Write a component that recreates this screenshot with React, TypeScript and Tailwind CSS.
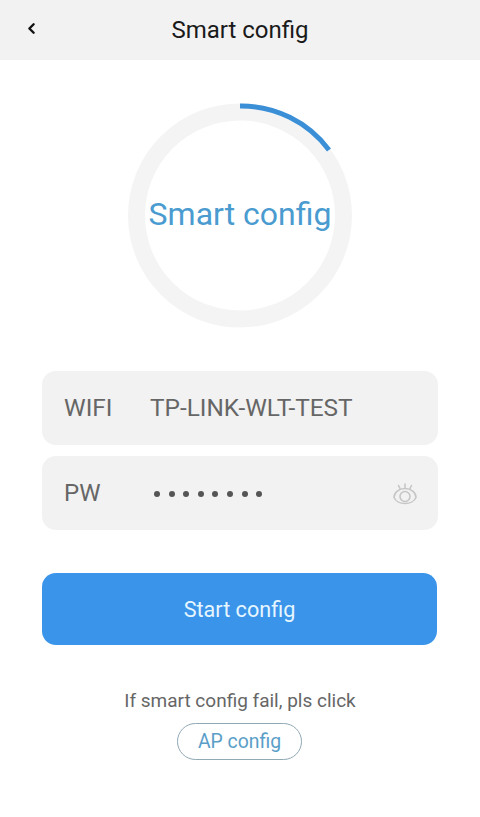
import { ChevronLeft } from 'lucide-react';

function EyeIcon() {
  return (
    <svg width="26" height="24" viewBox="0 0 26 24" fill="none" stroke="#c6c6c6" strokeWidth="1.6" strokeLinecap="round">
      <path d="M2 15.500C2 10.500 7 6.500 13 6.500s11 4 11 9c-1.500 3.500-6 6-11 6s-9.500-2.500-11-6z" />
      <circle cx="13" cy="14.500" r="5" />
      <path d="M8 6.500L6.500 3.500M13 5.500V2M18 6.500L19.500 3.500" />
    </svg>
  );
}

export default function App() {
  return (
    <div className="w-[480px] h-[817px] bg-white flex flex-col font-['Roboto',sans-serif]">
      <header className="h-[60px] bg-[#f2f2f2] flex items-center relative">
        <ChevronLeft className="absolute left-[23px] top-[20px] text-[#111]" size={17} strokeWidth={3.4} />
        <h1 className="w-full text-center text-[24px] leading-[60px] text-[#1a1a1a]">Smart config</h1>
      </header>

      <div className="mt-[43px] mx-auto w-[224px] h-[225px] relative flex items-center justify-center">
        <svg className="absolute inset-0" width="224" height="225" viewBox="0 0 224 225" fill="none">
          <circle cx="112" cy="112.5" r="103.500" stroke="#f4f4f4" strokeWidth="17" />
          <path d="M112 3 A109.5 109.5 0 0 1 201 47" stroke="#3a8fd6" strokeWidth="5" />
        </svg>
        <span className="relative text-[32px] leading-none text-[#4a9bd0] -mt-[4px]">Smart config</span>
      </div>

      <div className="mt-[43px] mx-[42px] flex flex-col gap-[11px]">
        <div className="h-[74px] bg-[#f2f2f2] rounded-[14px] flex items-center px-[22px] text-[24.400px] text-[#666]">
          <span className="w-[86px]">WIFI</span>
          <span>TP-LINK-WLT-TEST</span>
        </div>
        <div className="h-[74px] bg-[#f2f2f2] rounded-[14px] flex items-center px-[22px] text-[24px] text-[#666]">
          <span className="w-[90px]">PW</span>
          <span className="flex gap-[8.600px] mt-[2px]">
            {[0, 1, 2, 3, 4, 5, 6, 7].map((i) => (
              <span key={i} className="w-[6px] h-[6px] rounded-full bg-[#555]" />
            ))}
          </span>
          <span className="ml-auto -mr-[2px] mt-[1px] flex">
            <EyeIcon />
          </span>
        </div>
      </div>

      <button className="mt-[43px] mx-[42px] w-[395px] h-[72px] pt-[2px] bg-[#3a94ea] rounded-[14px] text-[21.600px] text-[#e6f6ff]">
        Start config
      </button>

      <p className="mt-[42px] text-center text-[19px] leading-[28px] text-[#666]">If smart config fail, pls click</p>
      <div className="mt-[8px] flex justify-center pr-[1px]">
        <span className="w-[125px] h-[37px] rounded-full border-[1.5px] border-[#8fa9b5] flex items-center justify-center text-[19.400px] text-[#5a9ec8]">
          AP config
        </span>
      </div>
    </div>
  );
}
